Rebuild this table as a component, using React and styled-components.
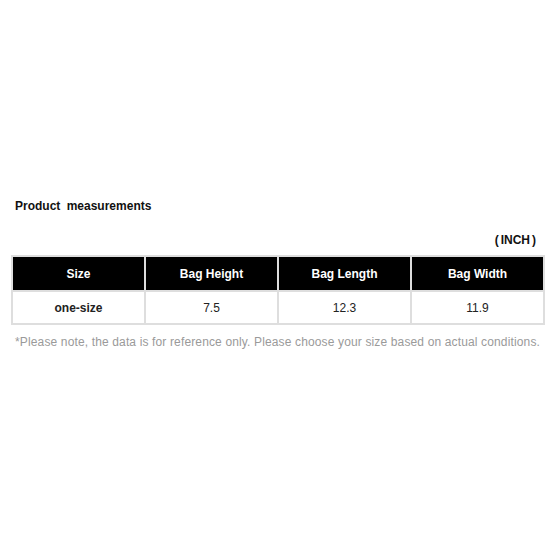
import styled, { createGlobalStyle } from 'styled-components';

const GlobalStyle = createGlobalStyle`
    html, body {
        margin: 0;
        padding: 0;
        background: #fff;
    }
    body {
        font-family: "Liberation Sans", Arial, sans-serif;
    }
`;

const Page = styled.div`
    width: 553px;
    height: 553px;
    padding: 198px 0 0 11px;
    box-sizing: border-box;
`;

const Title = styled.h2`
    margin: 0 0 0 4px;
    font-size: 12px;
    font-weight: bold;
    color: #111;
    word-spacing: 3px;
    line-height: 16px;
`;

const Unit = styled.div`
    width: 534px;
    margin-top: 18px;
    padding-right: 9px;
    box-sizing: border-box;
    text-align: right;
    font-size: 12px;
    font-weight: bold;
    color: #111;
    line-height: 16px;

    span {
        margin: 0 2px;
    }
`;

const Table = styled.div`
    width: 534px;
    margin-top: 7px;
    display: grid;
    grid-template-columns: repeat(4, 1fr);
    gap: 2px;
    padding: 2px;
    box-sizing: border-box;
    background: #dedede;
`;

const Cell = styled.div`
    height: ${(p) => (p.$head ? '33px' : '31px')};
    display: flex;
    align-items: center;
    justify-content: center;
    font-size: 12px;
    font-weight: ${(p) => (p.$head || p.$bold ? 'bold' : 'normal')};
    background: ${(p) => (p.$head ? '#000' : '#fff')};
    color: ${(p) => (p.$head ? '#fff' : '#222')};
`;

const Note = styled.p`
    margin: 9px 0 0 4px;
    font-size: 12px;
    letter-spacing: 0.14px;
    color: #9a9a9a;
    line-height: 16px;
    white-space: nowrap;
`;

const heads = ['Size', 'Bag Height', 'Bag Length', 'Bag Width'];
const rows = [['one-size', '7.5', '12.3', '11.9']];

function App() {
    return (
        <Page>
            <GlobalStyle />
            <Title>Product measurements</Title>
            <Unit>(<span>INCH</span>)</Unit>
            <Table>
                {heads.map((h) => (
                    <Cell key={h} $head>{h}</Cell>
                ))}
                {rows.map((r) =>
                    r.map((v, i) => (
                        <Cell key={i} $bold={i === 0}>{v}</Cell>
                    ))
                )}
            </Table>
            <Note>*Please note, the data is for reference only. Please choose your size based on actual conditions.</Note>
        </Page>
    );
}

export default App;
